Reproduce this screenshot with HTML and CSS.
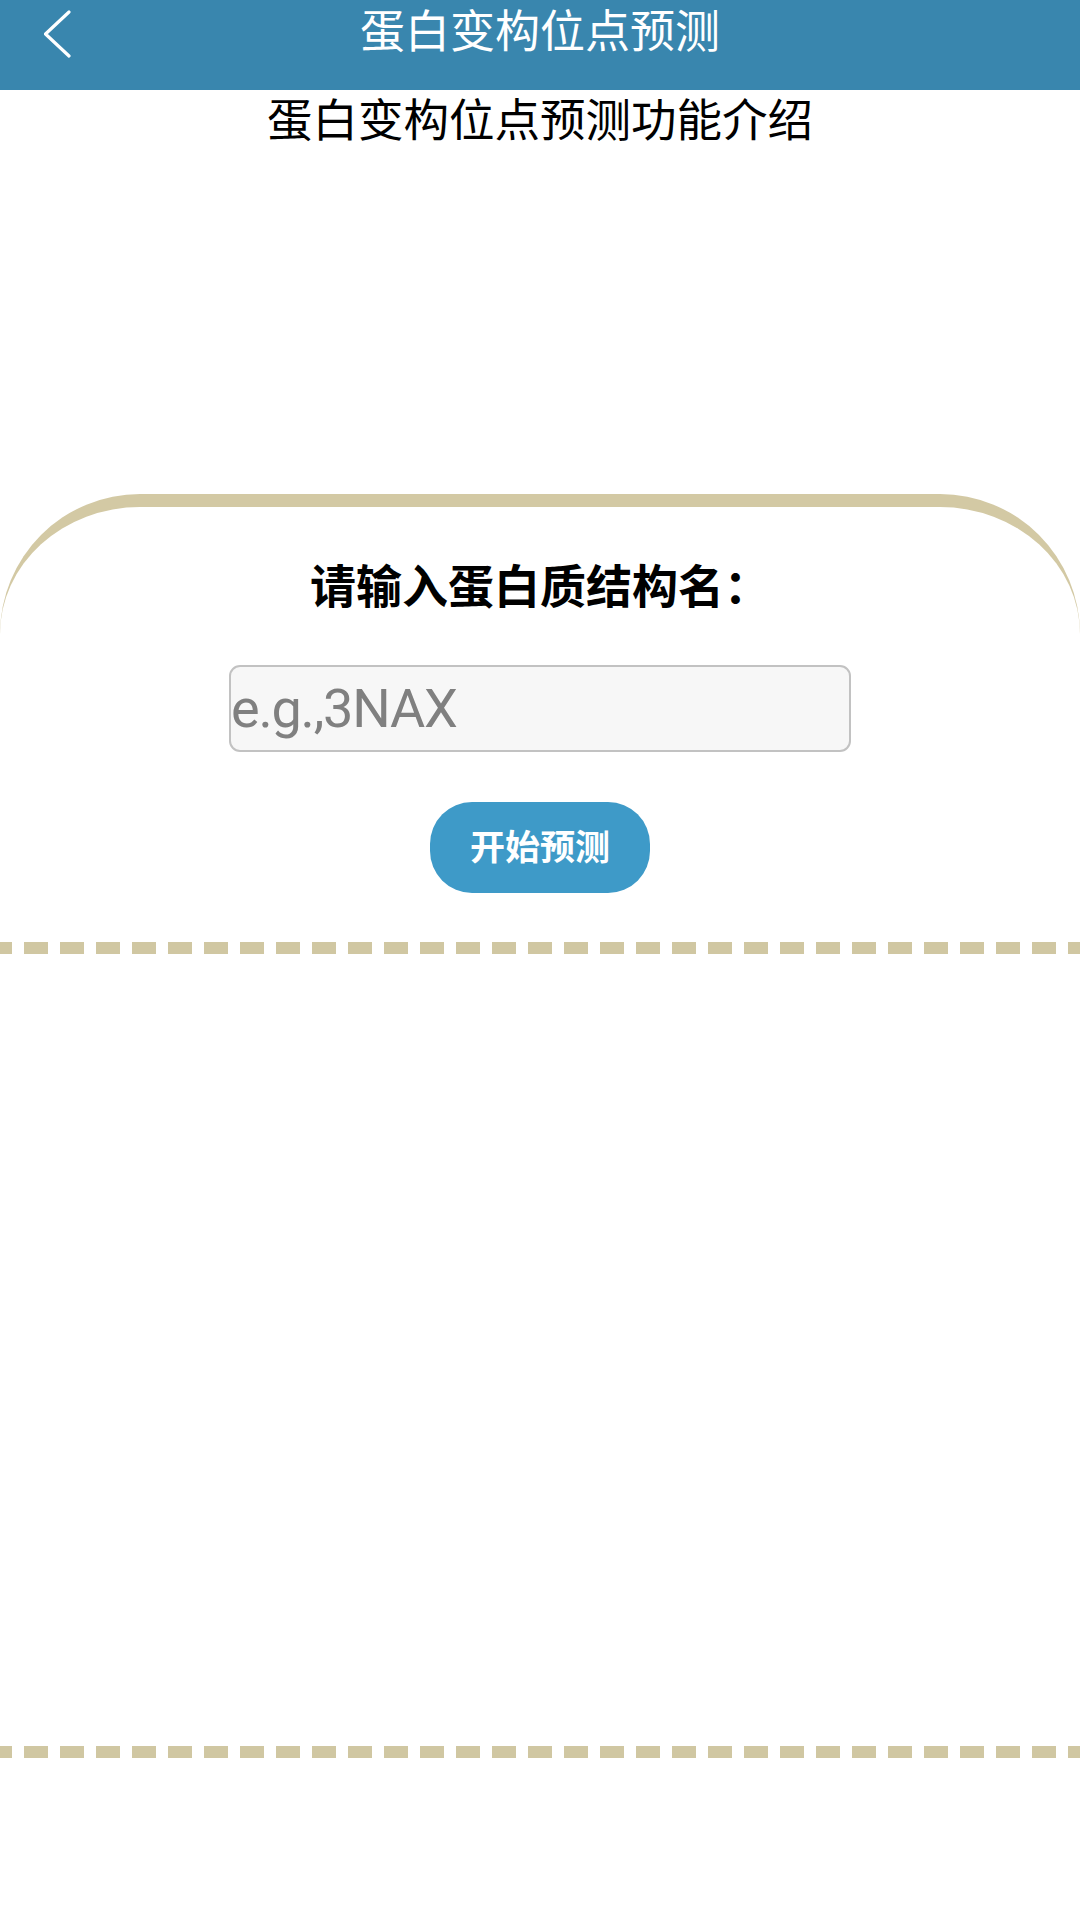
FILE: index.html
```html
<!DOCTYPE html>
<html lang="zh-CN">
<head>
<meta charset="utf-8">
<title>蛋白变构位点预测</title>
<link rel="stylesheet" href="styles.css">
</head>
<body>
<header class="topbar">
  <div class="back">
    <svg width="30" height="50" viewBox="0 0 30 50"><path d="M25 4 L1.5 26 L25 48" fill="none" stroke="#fff" stroke-width="3.2" stroke-linecap="round" stroke-linejoin="round"/></svg>
  </div>
  <div class="title">蛋白变构位点预测</div>
  <div></div>
</header>
<div class="intro">蛋白变构位点预测功能介绍</div>
<section class="card">
  <h2 class="label">请输入蛋白质结构名：</h2>
  <input class="pdb-input" type="text" placeholder="e.g.,3NAX">
  <button class="go">开始预测</button>
  <div class="dash"></div>
</section>
<section class="result"></section>
<div class="dash"></div>
</body>
</html>
```
FILE: styles.css
```css
html, body {
  margin: 0;
  padding: 0;
  background: #fff;
}
body {
  width: 1080px;
  font-family: "Noto Sans CJK SC", "Noto Sans", sans-serif;
  color: #000;
}
.topbar {
  height: 90px;
  background: #3986ae;
  display: grid;
  grid-template-columns: 1fr auto 1fr;
  align-items: start;
}
.back {
  padding-left: 44px;
  padding-top: 8px;
  height: 50px;
}
.back svg { display: block; }
.title {
  color: #fff;
  font-size: 45px;
  line-height: 58px;
  white-space: nowrap;
}
.intro {
  text-align: center;
  font-size: 45.5px;
  line-height: 60px;
  margin-top: -3px;
}
.card {
  margin-top: 347px;
  border-top: 13px solid #d3c9a4;
  border-left: 0;
  border-right: 0;
  border-radius: 140px 140px 0 0;
  display: flex;
  flex-direction: column;
  align-items: center;
}
.label {
  margin: 46px 0 0;
  font-size: 46px;
  line-height: 60px;
  font-weight: 700;
}
.pdb-input {
  margin-top: 52px;
  width: 622px;
  height: 87px;
  box-sizing: border-box;
  border: 2px solid #c2c2c2;
  border-radius: 11px;
  background: #f7f7f7;
  padding: 0;
  font-family: Roboto, "Noto Sans", sans-serif;
  font-size: 54px;
  letter-spacing: -1.2px;
  color: #333;
  outline: none;
}
.pdb-input::placeholder {
  color: #808080;
}
.go {
  margin-top: 50px;
  width: 220px;
  height: 91px;
  border: 0;
  border-radius: 42px;
  background: #3e9ac8;
  color: #fff;
  font-family: "Noto Sans CJK SC", sans-serif;
  font-size: 35px;
  font-weight: 700;
  padding: 0 0 6px;
}
.dash {
  align-self: stretch;
  height: 12px;
  background: repeating-linear-gradient(90deg, #d0c7a2 0 12px, transparent 12px 24px, #d0c7a2 24px 36px);
}
.card .dash {
  margin-top: 49px;
}
.result {
  height: 792px;
}
```
